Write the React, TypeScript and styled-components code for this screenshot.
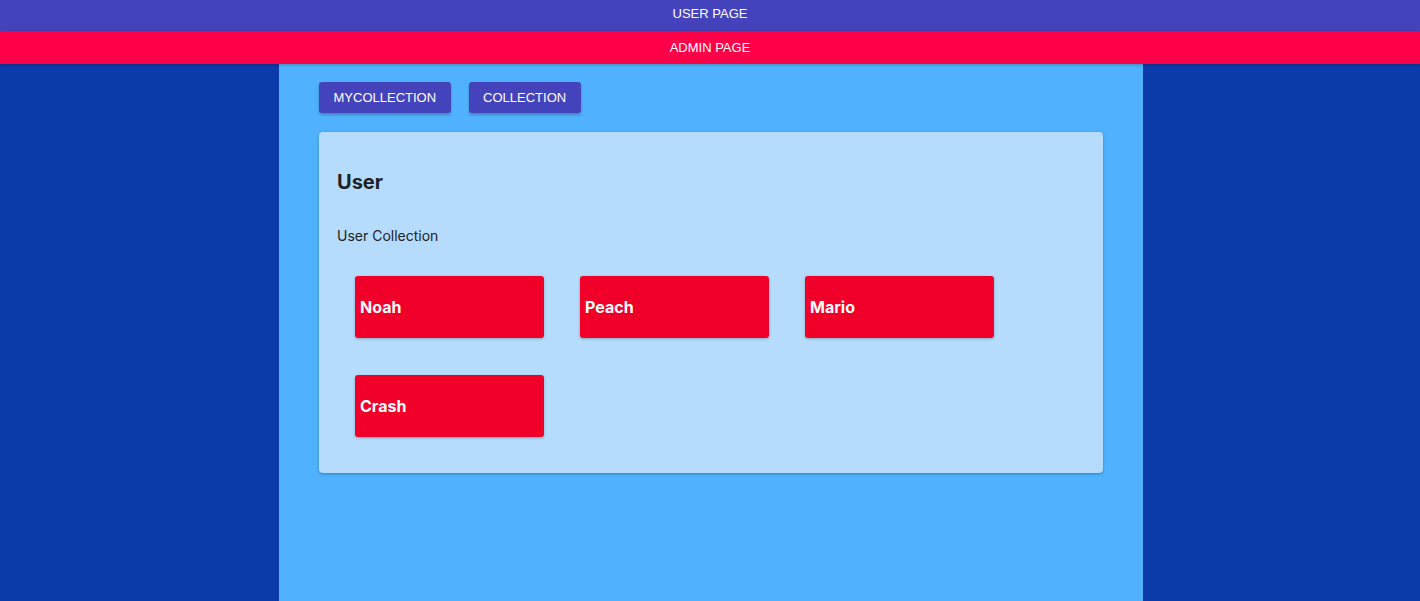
import React from "react";
import styled, { createGlobalStyle } from "styled-components";

const Global = createGlobalStyle`
  html, body { margin: 0; padding: 0; }
  body { background: #0b3ba8; font-family: "Liberation Sans", Arial, sans-serif; }
`;

const Page = styled.div`
  display: flex;
  flex-direction: column;
  min-height: 601px;
`;

const NavBar = styled.div<{ $bg: string; $h: number; $shift: number }>`
  background: ${(p) => p.$bg};
  height: ${(p) => p.$h}px;
  display: flex;
  align-items: center;
  justify-content: center;
  padding-bottom: ${(p) => p.$shift}px;
  box-sizing: border-box;
  color: #fff;
  font-family: "Liberation Sans", Arial, sans-serif;
  font-size: 13px;
  text-transform: uppercase;
  position: relative;
  z-index: 1;
  box-shadow: 0 1px 3px rgba(0, 0, 0, 0.25);
`;

const Column = styled.main`
  width: 864px;
  margin: 0 auto;
  padding: 18px 40px 0;
  box-sizing: border-box;
  background: #50b2fe;
  flex: 1;
  align-self: center;
  margin-left: calc(50% - 431px);
`;

const Toolbar = styled.div`
  display: flex;
  gap: 18px;
`;

const Button = styled.button`
  background: #4443bb;
  color: #fff;
  border: none;
  border-radius: 3px;
  height: 31px;
  padding: 0 14.5px;
  font-family: "Liberation Sans", Arial, sans-serif;
  font-size: 13px;
  text-transform: uppercase;
  box-shadow: 0 2px 3px rgba(0, 0, 0, 0.25);
`;

const Card = styled.section`
  margin-top: 19px;
  background: #b5dcfd;
  border-radius: 4px;
  padding: 18px 18px 36px;
  box-shadow: 0 1px 3px rgba(0, 0, 0, 0.3);
  font-family: Inter, "Noto Sans", sans-serif;
  color: #1d2128;
`;

const Title = styled.h2`
  margin: 20px 0 0;
  font-size: 20px;
  font-weight: 700;
  line-height: 24px;
`;

const Subtitle = styled.p`
  margin: 32px 0 0;
  font-size: 14px;
  line-height: 20px;
`;

const Grid = styled.div`
  display: grid;
  grid-template-columns: repeat(3, 189px);
  column-gap: 36px;
  row-gap: 37px;
  padding-left: 18px;
  margin-top: 30px;
`;

const Tile = styled.div`
  background: #f00028;
  height: 62px;
  border-radius: 3px;
  display: flex;
  align-items: center;
  padding-left: 5px;
  color: #fff;
  font-size: 16px;
  font-weight: 700;
  box-shadow: 0 1px 3px rgba(0, 0, 0, 0.25);
`;

const names = ["Noah", "Peach", "Mario", "Crash"];

export default function App() {
  return (
    <>
      <Global />
      <Page>
        <NavBar $bg="#4443bb" $h={31} $shift={4}>User Page</NavBar>
        <NavBar $bg="#ff0048" $h={33} $shift={1}>Admin Page</NavBar>
        <Column>
          <Toolbar>
            <Button>MyCollection</Button>
            <Button>Collection</Button>
          </Toolbar>
          <Card>
            <Title>User</Title>
            <Subtitle>User Collection</Subtitle>
            <Grid>
              {names.map((n) => (
                <Tile key={n}>{n}</Tile>
              ))}
            </Grid>
          </Card>
        </Column>
      </Page>
    </>
  );
}
